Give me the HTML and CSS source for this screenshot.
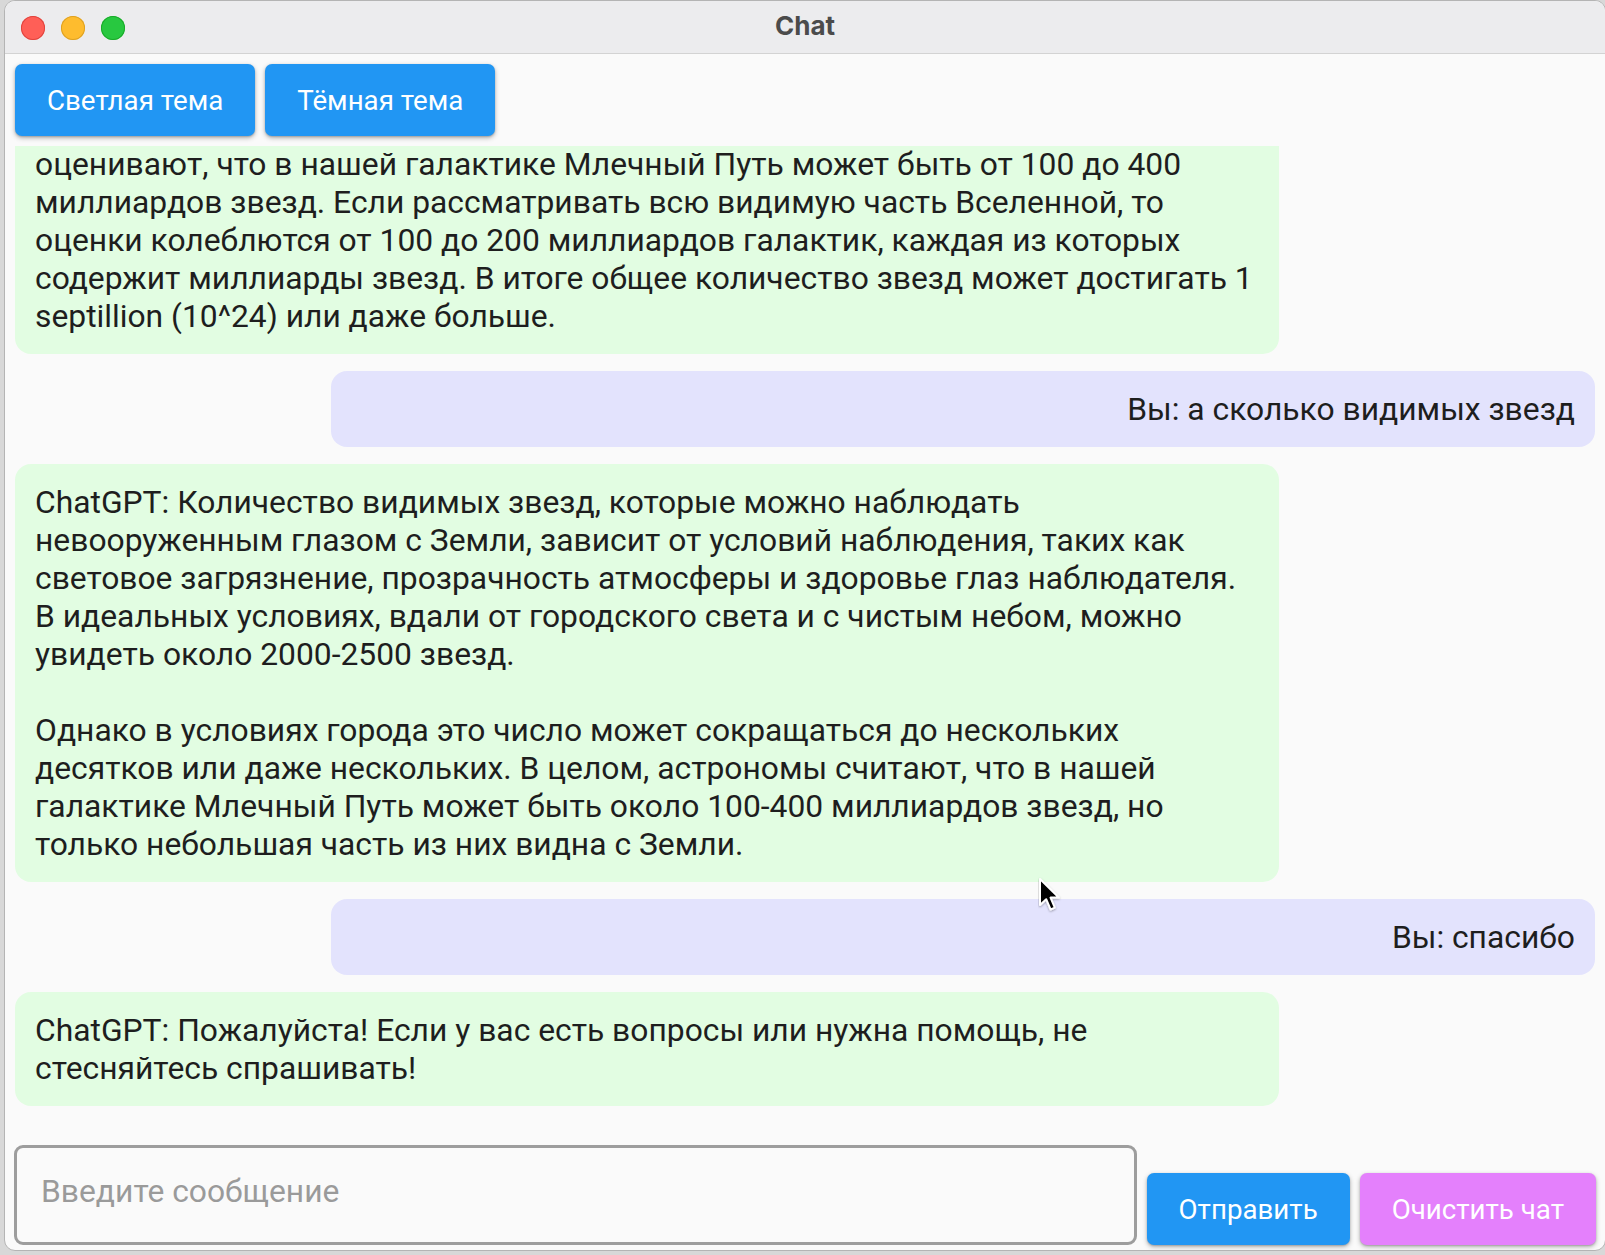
FILE: index.html
```html
<!DOCTYPE html>
<html lang="ru">
<head>
<meta charset="utf-8">
<title>Chat</title>
<link rel="stylesheet" href="styles.css">
</head>
<body>
<div class="window">
  <header class="titlebar">
    <div class="lights">
      <span class="light red"></span>
      <span class="light yellow"></span>
      <span class="light green"></span>
    </div>
    <div class="title">Chat</div>
    <div></div>
  </header>
  <main class="content">
    <div class="theme-row">
      <button class="btn btn-blue">Светлая тема</button>
      <button class="btn btn-blue">Тёмная тема</button>
    </div>
    <section class="messages">
      <div class="bubble bot">оценивают, что в нашей галактике Млечный Путь может быть от 100 до 400 миллиардов звезд. Если рассматривать всю видимую часть Вселенной, то оценки колеблются от 100 до 200 миллиардов галактик, каждая из которых содержит миллиарды звезд. В итоге общее количество звезд может достигать 1 septillion (10^24) или даже больше.</div>
      <div class="bubble user">Вы: а сколько видимых звезд</div>
      <div class="bubble bot">ChatGPT: Количество видимых звезд, которые можно наблюдать невооруженным глазом с Земли, зависит от условий наблюдения, таких как световое загрязнение, прозрачность атмосферы и здоровье глаз наблюдателя. В идеальных условиях, вдали от городского света и с чистым небом, можно увидеть около 2000-2500 звезд.<br><br>Однако в условиях города это число может сокращаться до нескольких десятков или даже нескольких. В целом, астрономы считают, что в нашей галактике Млечный Путь может быть около 100-400 миллиардов звезд, но только небольшая часть из них видна с Земли.</div>
      <div class="bubble user">Вы: спасибо</div>
      <div class="bubble bot">ChatGPT: Пожалуйста! Если у вас есть вопросы или нужна помощь, не стесняйтесь спрашивать!</div>
    </section>
    <div class="input-row">
      <div class="input-box"><input class="input" type="text" placeholder="Введите сообщение"></div>
      <button class="btn btn-blue">Отправить</button>
      <button class="btn btn-pink">Очистить чат</button>
    </div>
  </main>
  <svg class="cursor" width="26" height="38" viewBox="0 0 26 38" aria-hidden="true">
    <defs>
      <filter id="cs" x="-30%" y="-30%" width="160%" height="160%">
        <feDropShadow dx="0" dy="1" stdDeviation="1.2" flood-opacity="0.35"/>
      </filter>
    </defs>
    <path filter="url(#cs)" d="M2 2 L2 28 L8.2 22.2 L12.6 32.5 L16.8 30.7 L12.5 20.6 L20.8 20.6 Z" fill="#000" stroke="#fff" stroke-width="2" stroke-linejoin="round"/>
  </svg>
</div>
</body>
</html>
```
FILE: styles.css
```css
* { box-sizing: border-box; }
html, body { margin: 0; padding: 0; }
body {
  background: #d8d8d8;
  width: 1605px;
  height: 1255px;
  overflow: hidden;
  font-family: Roboto, "Noto Sans", sans-serif;
}
.window {
  position: relative;
  margin-left: 4px;
  width: 1602px;
  height: 1251px;
  border: 1px solid #b4b4b4;
  border-radius: 11px;
  overflow: hidden;
  display: flex;
  flex-direction: column;
  background: #fafafa;
}
.titlebar {
  height: 53px;
  flex: none;
  background: #ececee;
  border-bottom: 1px solid #d3d3d3;
  display: grid;
  grid-template-columns: 1fr auto 1fr;
  align-items: center;
}
.lights {
  display: flex;
  gap: 16px;
  padding-left: 16px;
  padding-top: 2px;
}
.light {
  width: 24px;
  height: 24px;
  border-radius: 50%;
  display: block;
}
.red { background: #ff5f57; box-shadow: inset 0 0 0 1px #e0443e; }
.yellow { background: #febc2e; box-shadow: inset 0 0 0 1px #dea123; }
.green { background: #28c840; box-shadow: inset 0 0 0 1px #1aab29; }
.title {
  font-family: Inter, "Open Sans", sans-serif;
  font-weight: 700;
  font-size: 26px;
  color: #4b4b4b;
  padding-bottom: 4px;
}
.content {
  flex: 1;
  display: flex;
  flex-direction: column;
  min-height: 0;
}
.theme-row {
  display: flex;
  gap: 10px;
  padding: 10px 10px 10px 10px;
}
.btn {
  height: 72px;
  padding: 0 32px;
  border: none;
  border-radius: 7px;
  font-family: Roboto, sans-serif;
  font-size: 27.7px;
  font-weight: 400;
  color: #fff;
  box-shadow: 0 2px 5px rgba(0,0,0,0.28), 0 1px 2px rgba(0,0,0,0.18);
  flex: none;
}
.btn-blue { background: #2196f3; }
.btn-pink { background: #e480fc; }
.messages {
  flex: 1;
  min-height: 0;
  overflow: hidden;
  display: flex;
  flex-direction: column;
  justify-content: flex-end;
  gap: 17px;
  padding: 0 10px 39px 10px;
}
.bubble {
  width: 80%;
  flex: none;
  padding: 19px 20px;
  border-radius: 16px;
  font-size: 31.8px;
  line-height: 38px;
  color: #1e1e1e;
}
.bot { background: #e2fde2; align-self: flex-start; }
.user { background: #e3e3fd; align-self: flex-end; text-align: right; }
.input-row {
  display: flex;
  align-items: flex-end;
  gap: 10px;
  padding: 0 9px 5px 9px;
}
.input-box {
  flex: 1;
  height: 100px;
  border: 3px solid #9d9d9d;
  border-radius: 9px;
  display: flex;
  align-items: center;
  padding: 0 22px 8px 22px;
}
.input {
  width: 100%;
  border: none;
  outline: none;
  background: transparent;
  font-family: Roboto, sans-serif;
  font-size: 31.8px;
  color: #222;
}
.input::placeholder { color: #9a9a9a; }
.cursor {
  position: absolute;
  left: 1033px;
  top: 876px;
}
```
